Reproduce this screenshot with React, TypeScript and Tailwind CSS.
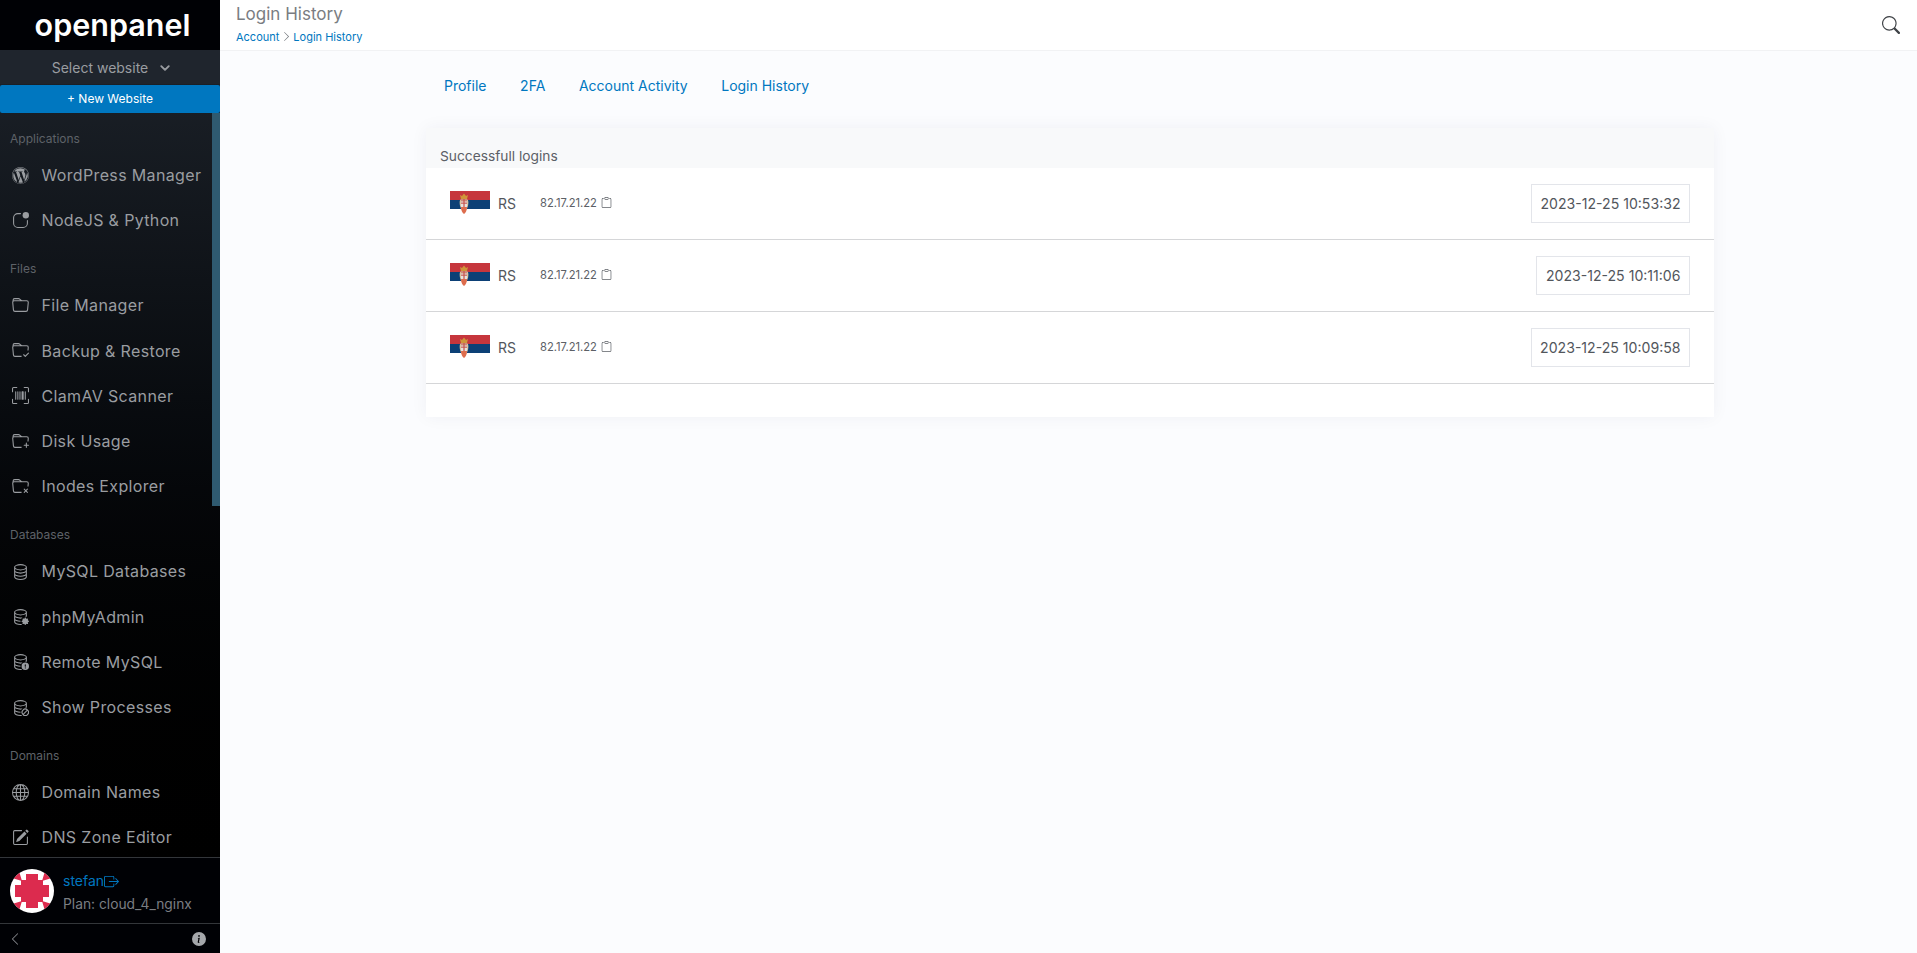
import { ReactNode } from "react";
import {
  BsAppIndicator,
  BsBoxArrowRight,
  BsChevronDown,
  BsChevronLeft,
  BsChevronRight,
  BsClipboard,
  BsDatabase,
  BsDatabaseExclamation,
  BsDatabaseGear,
  BsDatabaseSlash,
  BsFolder,
  BsFolderCheck,
  BsFolderPlus,
  BsFolderX,
  BsGlobe,
  BsInfoCircleFill,
  BsPencilSquare,
  BsSearch,
  BsUpcScan,
  BsWordpress,
} from "react-icons/bs";

const sections: { title: string; items: { label: string; icon: ReactNode }[] }[] = [
  {
    title: "Applications",
    items: [
      { label: "WordPress Manager", icon: <BsWordpress /> },
      { label: "NodeJS & Python", icon: <BsAppIndicator /> },
    ],
  },
  {
    title: "Files",
    items: [
      { label: "File Manager", icon: <BsFolder /> },
      { label: "Backup & Restore", icon: <BsFolderCheck /> },
      { label: "ClamAV Scanner", icon: <BsUpcScan /> },
      { label: "Disk Usage", icon: <BsFolderPlus /> },
      { label: "Inodes Explorer", icon: <BsFolderX /> },
    ],
  },
  {
    title: "Databases",
    items: [
      { label: "MySQL Databases", icon: <BsDatabase /> },
      { label: "phpMyAdmin", icon: <BsDatabaseGear /> },
      { label: "Remote MySQL", icon: <BsDatabaseExclamation /> },
      { label: "Show Processes", icon: <BsDatabaseSlash /> },
    ],
  },
  {
    title: "Domains",
    items: [
      { label: "Domain Names", icon: <BsGlobe /> },
      { label: "DNS Zone Editor", icon: <BsPencilSquare /> },
    ],
  },
];

const logins = [
  { ip: "82.17.21.22", country: "RS", time: "2023-12-25 10:53:32" },
  { ip: "82.17.21.22", country: "RS", time: "2023-12-25 10:11:06" },
  { ip: "82.17.21.22", country: "RS", time: "2023-12-25 10:09:58" },
];

function SerbiaFlag() {
  return (
    <svg width="40" height="27" viewBox="0 0 40 27" className="shrink-0">
      <rect width="40" height="9" fill="#c6363c" />
      <rect y="9" width="40" height="9" fill="#0c4076" />
      <rect y="18" width="40" height="9" fill="#ffffff" />
      <path d="M10.5 8.5 C9 10 9.5 16 12 19 L16 19 C18.5 16 19 10 17.5 8.5 Z" fill="#d8c6a0" />
      <path d="M11 8 L10 4 L12 5 L14 2.5 L16 5 L18 4 L17 8 Z" fill="#d0953a" />
      <path d="M11 8 H17 V16 H11 Z" fill="#e6e2e0" />
      <rect x="11" y="8" width="6" height="2.5" fill="#cf8a7a" />
      <rect x="13.4" y="8" width="1.2" height="8" fill="#c6544c" />
      <rect x="11" y="11.6" width="6" height="1.1" fill="#c6544c" />
      <path d="M11 16 H17 C17 19.5 15.5 22 14 23 C12.5 22 11 19.5 11 16 Z" fill="#dd6d4e" />
    </svg>
  );
}

function Avatar() {
  return (
    <svg width="44" height="44" viewBox="0 0 44 44" className="shrink-0">
      <defs>
        <clipPath id="avatar-clip">
          <circle cx="22" cy="22" r="22" />
        </clipPath>
      </defs>
      <g clipPath="url(#avatar-clip)">
        <rect width="44" height="44" fill="#ffffff" />
        <path
          d="M16 5 H28 V11 H33 V16 H39 V28 H33 V33 H28 V39 H16 V33 H11 V28 H5 V16 H11 V11 H16 Z"
          fill="#dc2b4e"
        />
        <path d="M2 9 L9 2 L12 12 Z M42 9 L35 2 L32 12 Z M2 35 L9 42 L12 32 Z M42 35 L35 42 L32 32 Z" fill="#dc2b4e" />
      </g>
    </svg>
  );
}

function Sidebar() {
  return (
    <aside className="flex h-screen w-[220px] shrink-0 flex-col bg-gradient-to-b from-[#1f252d] to-[#000000]">
      <div className="flex h-[50px] shrink-0 items-center justify-center bg-[#000105] pl-[5px] text-[30.5px] font-semibold text-white">
        openpanel
      </div>
      <div className="flex h-[34px] shrink-0 items-center justify-center gap-3 bg-[#1f252d] pl-[2px] pt-px text-sm text-[#9a9da1]">
        Select website
        <BsChevronDown className="text-[10px] stroke-2" />
      </div>
      <div className="mt-px flex h-[28px] shrink-0 items-center justify-center rounded-[2px] bg-[#0077c0] text-xs text-white">
        + New Website
      </div>
      <div className="flex min-h-0 flex-1">
        <nav className="min-w-0 flex-1 overflow-hidden pt-[16.6px]">
          {sections.map((section) => (
            <div key={section.title} className="mb-[16.75px]">
              <div className="flex h-[18px] items-center pl-[10px] text-xs text-[#5e6268]">
                {section.title}
              </div>
              <div className="mt-[5px]">
                {section.items.map((item) => (
                  <div key={item.label} className="flex h-[45.25px] items-center whitespace-nowrap pl-[11px] text-base tracking-[0.35px] text-[#9a9da1]">
                    <span className="flex w-[18px] justify-center text-[17px] text-[#9a9da1]">{item.icon}</span>
                    <span className="ml-[12.5px]">{item.label}</span>
                  </div>
                ))}
              </div>
            </div>
          ))}
        </nav>
        <div className="w-[8px] shrink-0">
          <div className="h-[393px] bg-[#2f5a70]" />
        </div>
      </div>
      <div className="flex h-[66px] shrink-0 items-center gap-[9px] border-t border-[#33363a] bg-[#000105] pl-[10px]">
        <Avatar />
        <div className="min-w-0 pt-[5px]">
          <div className="flex items-center text-sm text-[#0077c0]">
            stefan
            <BsBoxArrowRight className="text-[15px]" />
          </div>
          <div className="mt-[3px] text-[13.8px] whitespace-nowrap text-[#7b7e83]">Plan: cloud_4_nginx</div>
        </div>
      </div>
      <div className="flex h-[30px] shrink-0 items-center justify-between border-t border-[#33363a] bg-[#000105] pr-[14px] pl-[8px]">
        <BsChevronLeft className="text-sm text-[#8a8d92]" />
        <BsInfoCircleFill className="text-sm text-[#a4a7ab]" />
      </div>
    </aside>
  );
}

function LoginRow({ ip, country, time }: { ip: string; country: string; time: string }) {
  return (
    <div className="flex h-[72px] items-center justify-between border-b border-[#d5d6d8] bg-white pr-[24px] pl-[24px]">
      <div className="flex items-start">
        <div className="pt-px">
          <SerbiaFlag />
        </div>
        <span className="mt-[4px] ml-2 text-sm text-[#52565c]">{country}</span>
        <span className="mt-[5px] ml-[24px] flex items-center text-[11.2px] text-[#5c6066]">
          {ip}
          <BsClipboard className="ml-[4px] text-[11px]" />
        </span>
      </div>
      <div className="flex h-[39px] items-center border border-[#e3e5ea] px-[8.5px] pt-px text-[14.1px] text-[#52565c]">{time}</div>
    </div>
  );
}

export default function App() {
  return (
    <div className="flex h-screen overflow-hidden bg-[#fbfcfe] font-['Inter',sans-serif]">
      <Sidebar />
      <div className="flex min-w-0 flex-1 flex-col">
        <header className="flex h-[51px] shrink-0 items-center justify-between border-b border-[#f1f2f4] bg-white pr-[17px] pl-[16px]">
          <div>
            <h1 className="-mt-[4px] text-[17px] leading-[24px] text-[#7a7d82]">Login History</h1>
            <div className="mt-[3px] flex items-center text-[11px] leading-[16px] text-[#0077c0]">
              Account
              <BsChevronRight className="mx-[1.5px] text-[11px] text-[#6c7076]" />
              Login History
            </div>
          </div>
          <BsSearch className="text-[18px] text-[#3f4347]" />
        </header>
        <main className="pl-[206px]">
          <nav className="flex h-[77px] items-center gap-[33.6px] pb-[7px] pl-[18px] text-sm text-[#0077c0]">
            <span>Profile</span>
            <span>2FA</span>
            <span>Account Activity</span>
            <span>Login History</span>
          </nav>
          <section className="w-[1288px] bg-white pb-[33px] shadow-[0_0_16px_rgba(30,40,70,0.05)]">
            <div className="flex h-[40px] items-end bg-[#f8f9fa] pb-px pl-[14px] text-[13.75px] text-[#5c6066]">
              Successfull logins
            </div>
            {logins.map((login) => (
              <LoginRow key={login.time} {...login} />
            ))}
          </section>
        </main>
      </div>
    </div>
  );
}
